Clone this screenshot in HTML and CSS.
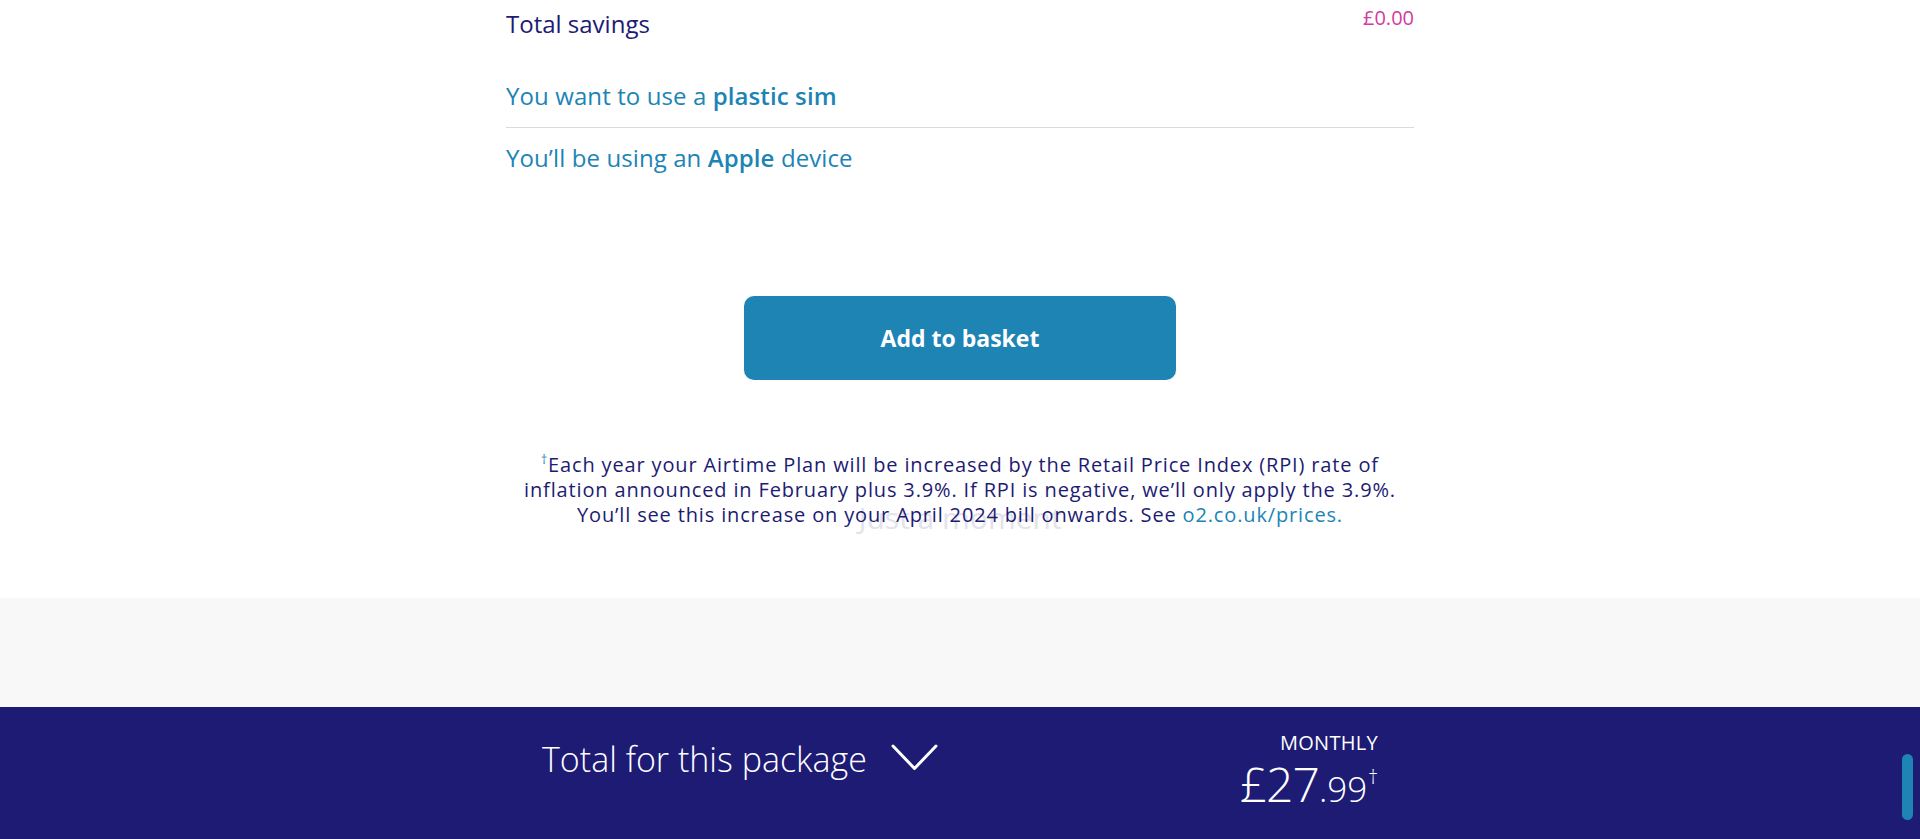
FILE: index.html
```html
<!DOCTYPE html>
<html lang="en">
<head>
<meta charset="utf-8">
<title>Total for this package</title>
<link rel="stylesheet" href="styles.css">
</head>
<body>
<main class="summary">
  <div class="savings">
    <span class="savings-label">Total savings</span>
    <span class="savings-value">£0.00</span>
  </div>
  <ul class="choices">
    <li class="choice">You want to use a <strong>plastic sim</strong></li>
    <li class="choice">You’ll be using an <strong>Apple</strong> device</li>
  </ul>
  <div class="actions">
    <button class="basket-btn" type="button">Add to basket</button>
  </div>
  <div class="footnote">
    <span class="ghost">Just a moment</span>
    <p class="footnote-text"><sup class="dagger">†</sup>Each year your Airtime Plan will be increased by the Retail Price Index (RPI) rate of<br>inflation announced in February plus 3.9%. If RPI is negative, we’ll only apply the 3.9%.<br>You’ll see this increase on your April 2024 bill onwards. See <a class="link" href="#">o2.co.uk/prices.</a></p>
  </div>
</main>
<section class="grey-band"></section>
<footer class="package-bar">
  <div class="package-inner">
    <div class="package-title">
      <span>Total for this package</span>
      <svg class="chevron" width="47" height="27" viewBox="0 0 47 27" aria-hidden="true"><polyline points="2,2 23.5,24.5 45,2" fill="none" stroke="#ffffff" stroke-width="3" stroke-linecap="round" stroke-linejoin="round"/></svg>
    </div>
    <div class="package-price">
      <div class="price-label">MONTHLY</div>
      <div class="price"><span class="pounds">£27</span><span class="pence">.99</span><span class="price-dagger">†</span></div>
    </div>
  </div>
  <span class="scroll-thumb"></span>
</footer>
</body>
</html>
```
FILE: styles.css
```css
html, body {
  margin: 0;
  padding: 0;
  background: #ffffff;
  overflow: hidden;
}
body {
  font-family: "Open Sans", "Noto Sans", "Liberation Sans", sans-serif;
  color: #1d1b72;
}
.summary {
  width: 908px;
  margin: 0 auto;
}
.savings {
  display: flex;
  justify-content: space-between;
  align-items: flex-start;
  padding-top: 8px;
}
.savings-label {
  font-size: 24px;
  line-height: 32px;
  color: #1d1b72;
}
.savings-value {
  font-size: 20px;
  line-height: 20px;
  color: #d23c9f;
}
.choices {
  list-style: none;
  margin: 26px 0 0;
  padding: 0;
}
.choice {
  font-size: 24px;
  line-height: 32px;
  color: #1c84b5;
  padding: 14px 0 15px;
  letter-spacing: 0.1px;
}
.choice:first-child {
  border-bottom: 1px solid #dadada;
}
.choice strong {
  font-weight: 600;
}
.actions {
  display: flex;
  justify-content: center;
  margin-top: 107px;
}
.basket-btn {
  width: 432px;
  height: 84px;
  border: none;
  border-radius: 10px;
  background: #1e84b4;
  color: #ffffff;
  font-family: "Open Sans", "Noto Sans", "Liberation Sans", sans-serif;
  font-size: 23px;
  font-weight: 700;
  cursor: pointer;
}
.footnote {
  position: relative;
  isolation: isolate;
  margin-top: 72px;
  padding-bottom: 71px;
}
.ghost {
  position: absolute;
  left: 0;
  right: 0;
  top: 51px;
  text-align: center;
  font-size: 30px;
  line-height: 30px;
  color: #e3e3ec;
  z-index: 0;
}
.footnote-text {
  position: relative;
  z-index: 1;
  margin: 0;
  text-align: center;
  font-size: 20px;
  line-height: 25px;
  letter-spacing: 0.85px;
  color: #1d1b72;
  white-space: nowrap;
}
.dagger {
  color: #1c84b5;
  font-size: 12px;
  line-height: 0;
  vertical-align: 8px;
}
.link {
  color: #1c84b5;
  text-decoration: none;
}
.grey-band {
  height: 109px;
  background: #f8f8f8;
}
.package-bar {
  position: relative;
  height: 132px;
  background: #1d1b74;
  color: #ffffff;
}
.package-inner {
  width: 836px;
  margin: 0 auto;
  display: flex;
  justify-content: space-between;
  align-items: flex-start;
}
.package-title {
  display: flex;
  align-items: center;
  gap: 24px;
  margin-top: 32px;
  font-size: 34px;
  line-height: 40px;
  font-weight: 300;
}
.chevron {
  display: block;
  margin-top: -4px;
}
.package-price {
  text-align: right;
  margin-top: 24px;
}
.price-label {
  font-size: 20px;
  line-height: 24px;
  font-weight: 500;
  letter-spacing: 0.3px;
}
.price {
  margin-top: 4px;
  line-height: 50px;
  font-weight: 300;
  white-space: nowrap;
}
.pounds {
  font-size: 48px;
  letter-spacing: -1px;
}
.pence {
  font-size: 35px;
}
.price-dagger {
  font-size: 20px;
  vertical-align: 18px;
  line-height: 0;
  margin-left: 1px;
}
.scroll-thumb {
  position: absolute;
  right: 7px;
  top: 47px;
  width: 11px;
  height: 66px;
  border-radius: 6px;
  background: #1e84b4;
}
```
